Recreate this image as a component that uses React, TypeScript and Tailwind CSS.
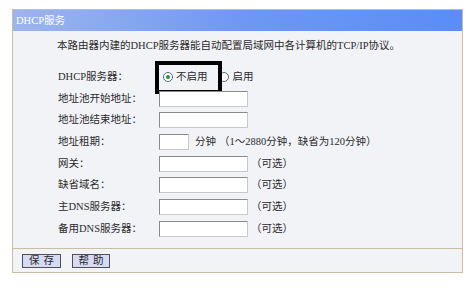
import React from "react";

const font = { fontFamily: '"Liberation Serif", "Noto Sans CJK SC", serif' };

function Input({ w = "w-[89px]" }: { w?: string }) {
  return <div className={`${w} h-[16px] bg-white border border-[#8a8a8a] border-r-[#c8c8c8] border-b-[#c8c8c8]`} />;
}

function Row({ label, children }: { label: string; children: React.ReactNode }) {
  return (
    <div className="flex items-center h-[21.7px]">
      <div className="w-[101px] shrink-0 text-[#2a2a2a]">{label}</div>
      <div className="flex items-center relative">{children}</div>
    </div>
  );
}

function Radio({ checked }: { checked?: boolean }) {
  return (
    <span className="w-[10px] h-[10px] rounded-full border border-[#5a6b7c] bg-white flex items-center justify-center">
      {checked && <span className="w-[4px] h-[4px] rounded-full bg-[#2f8f3a]" />}
    </span>
  );
}

export default function App() {
  return (
    <div className="w-[473px] h-[294px] bg-white pt-[9px] pl-[12px]" style={font}>
      <div className="w-[451px] h-[264px] border border-[#cbbd9f] bg-[#f2f3f7] flex flex-col text-[10.5px] text-[#2a2a2a]">
        <div className="h-[21px] bg-gradient-to-r from-[#9cb6ec] via-[#6f98f3] to-[#5b8cf7] text-white flex items-center pl-[3px] shrink-0">
          DHCP服务
        </div>
        <div className="flex-1 pl-[45px] pt-[7px]">
          <div className="h-[15px] flex items-center -ml-[1px]">
            本路由器内建的DHCP服务器能自动配置局域网中各计算机的TCP/IP协议。
          </div>
          <div className="mt-[13px]">
            <Row label="DHCP服务器：">
              <div className="flex items-center ml-[4px]">
                <Radio checked />
                <span className="ml-[3px]">不启用</span>
                <span className="ml-[11px]"><Radio /></span>
                <span className="ml-[4px]">启用</span>
              </div>
              <div className="absolute left-[-4px] top-[-8px] w-[67px] h-[33px] border-[4px] border-black" />
            </Row>
            <Row label="地址池开始地址："><Input /></Row>
            <Row label="地址池结束地址："><Input /></Row>
            <Row label="地址租期：">
              <Input w="w-[30px]" />
              <span className="ml-[6px]">分钟</span>
              <span className="ml-[3px]">（1～2880分钟，缺省为120分钟）</span>
            </Row>
            <Row label="网关："><Input /><span className="ml-[3px]">（可选）</span></Row>
            <Row label="缺省域名："><Input /><span className="ml-[3px]">（可选）</span></Row>
            <Row label="主DNS服务器："><Input /><span className="ml-[3px]">（可选）</span></Row>
            <Row label="备用DNS服务器："><Input /><span className="ml-[3px]">（可选）</span></Row>
          </div>
        </div>
        <div className="h-[24px] border-t border-[#cbbd9f] flex items-center pl-[9px] gap-[11px] shrink-0">
          <div className="w-[39px] h-[14px] bg-[#d6daf3] border border-[#50505a] flex items-center justify-center tracking-[4px] pl-[4px]">保存</div>
          <div className="w-[38px] h-[14px] bg-[#d6daf3] border border-[#50505a] flex items-center justify-center tracking-[4px] pl-[4px]">帮助</div>
        </div>
      </div>
    </div>
  );
}
